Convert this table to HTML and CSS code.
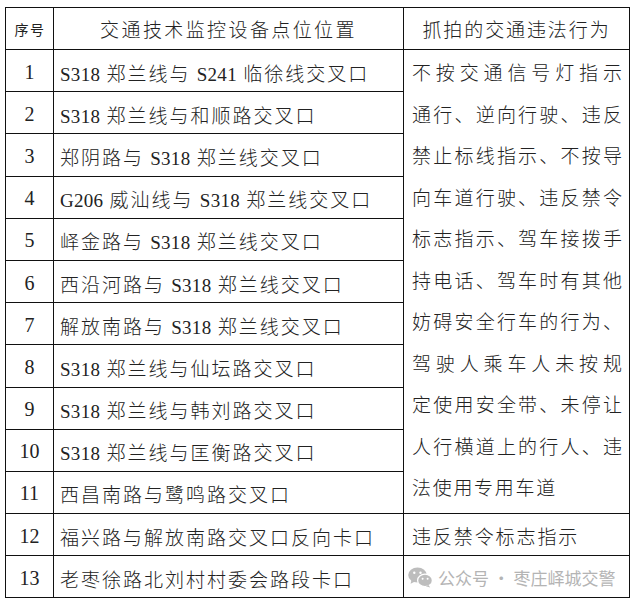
FILE: index.html
```html
<!DOCTYPE html>
<html lang="zh-CN">
<head>
<meta charset="utf-8">
<link rel="stylesheet" href="styles.css">
</head>
<body>
<table class="tbl">
  <colgroup>
    <col class="c1"><col class="c2"><col class="c3">
  </colgroup>
  <tr class="hd">
    <td class="no-h">序号</td>
    <td class="loc-h">交通技术监控设备点位位置</td>
    <td class="act-h">抓拍的交通违法行为</td>
  </tr>
  <tr>
    <td class="no">1</td>
    <td class="loc"><span class="lat">S318</span> 郑兰线与 <span class="lat">S241</span> 临徐线交叉口</td>
    <td class="act" rowspan="11">
      <span class="ln">不按交通信号灯指示</span>
      <span class="ln">通行、逆向行驶、违反</span>
      <span class="ln">禁止标线指示、不按导</span>
      <span class="ln">向车道行驶、违反禁令</span>
      <span class="ln">标志指示、驾车接拨手</span>
      <span class="ln">持电话、驾车时有其他</span>
      <span class="ln">妨碍安全行车的行为、</span>
      <span class="ln">驾驶人乘车人未按规</span>
      <span class="ln">定使用安全带、未停让</span>
      <span class="ln">人行横道上的行人、违</span>
      <span class="ln last">法使用专用车道</span>
    </td>
  </tr>
  <tr>
    <td class="no">2</td>
    <td class="loc"><span class="lat">S318</span> 郑兰线与和顺路交叉口</td>
  </tr>
  <tr>
    <td class="no">3</td>
    <td class="loc">郑阴路与 <span class="lat">S318</span> 郑兰线交叉口</td>
  </tr>
  <tr>
    <td class="no">4</td>
    <td class="loc"><span class="lat">G206</span> 威汕线与 <span class="lat">S318</span> 郑兰线交叉口</td>
  </tr>
  <tr>
    <td class="no">5</td>
    <td class="loc">峄金路与 <span class="lat">S318</span> 郑兰线交叉口</td>
  </tr>
  <tr>
    <td class="no">6</td>
    <td class="loc">西沿河路与 <span class="lat">S318</span> 郑兰线交叉口</td>
  </tr>
  <tr>
    <td class="no">7</td>
    <td class="loc">解放南路与 <span class="lat">S318</span> 郑兰线交叉口</td>
  </tr>
  <tr>
    <td class="no">8</td>
    <td class="loc"><span class="lat">S318</span> 郑兰线与仙坛路交叉口</td>
  </tr>
  <tr>
    <td class="no">9</td>
    <td class="loc"><span class="lat">S318</span> 郑兰线与韩刘路交叉口</td>
  </tr>
  <tr>
    <td class="no">10</td>
    <td class="loc"><span class="lat">S318</span> 郑兰线与匡衡路交叉口</td>
  </tr>
  <tr>
    <td class="no">11</td>
    <td class="loc">西昌南路与鹭鸣路交叉口</td>
  </tr>
  <tr>
    <td class="no">12</td>
    <td class="loc">福兴路与解放南路交叉口反向卡口</td>
    <td class="act1">违反禁令标志指示</td>
  </tr>
  <tr>
    <td class="no">13</td>
    <td class="loc">老枣徐路北刘村村委会路段卡口</td>
    <td class="wm-cell">
      <span class="wm">
        <svg class="wx" width="25" height="21" viewBox="0 0 25 21">
          <ellipse cx="9.5" cy="8" rx="9.3" ry="7.6" fill="#bdbdbd"/>
          <path d="M3.5 13 L2.6 16.8 L7 14.6 Z" fill="#bdbdbd"/>
          <circle cx="6.3" cy="5.8" r="1.2" fill="#fff"/>
          <circle cx="12.5" cy="5.8" r="1.2" fill="#fff"/>
          <ellipse cx="17" cy="13.4" rx="7.4" ry="6.2" fill="#bdbdbd" stroke="#fff" stroke-width="1.3"/>
          <path d="M20.5 18 L22.2 20.6 L17.8 19.2 Z" fill="#bdbdbd"/>
          <circle cx="14.6" cy="11.8" r="1" fill="#fff"/>
          <circle cx="19.6" cy="11.8" r="1" fill="#fff"/>
        </svg>
        <span class="wm-t">公众号 · 枣庄峄城交警</span>
      </span>
    </td>
  </tr>
</table>
</body>
</html>
```

FILE: styles.css
```css
html, body {
  margin: 0;
  padding: 0;
  background: #fff;
}

body {
  font-family: "Noto Sans CJK SC", "Liberation Serif", serif;
  color: #222;
}

.tbl {
  border-collapse: collapse;
  table-layout: fixed;
  width: 624px;
  margin: 7px 0 0 5px;
}

.c1 { width: 48px; }
.c2 { width: 350px; }
.c3 { width: 226px; }

.tbl td {
  border: 1px solid #111;
  vertical-align: middle;
  white-space: nowrap;
}

.tbl .no-h {
  height: 41px;
  padding: 0 0 0 1px;
  text-align: center;
  font-size: 14px;
  letter-spacing: 1.5px;
}

.tbl .loc-h {
  height: 41px;
  padding: 0;
  text-align: center;
  font-size: 19px;
  letter-spacing: 2.4px;
  font-weight: 300;
}

.tbl .act-h {
  height: 41px;
  padding: 0;
  text-align: center;
  font-size: 19px;
  letter-spacing: 1.9px;
  font-weight: 300;
}

.tbl .no {
  height: 38.2px;
  padding: 3px 0 0 0;
  text-align: center;
  font-family: "Liberation Serif", serif;
  font-size: 20px;
}

.tbl .loc {
  height: 38.2px;
  padding: 3px 0 0 6px;
  font-size: 19px;
  letter-spacing: 2px;
  font-weight: 300;
}

.lat {
  font-family: "Liberation Serif", serif;
  font-size: 19px;
  letter-spacing: 0.3px;
  font-weight: 400;
}

.tbl .act {
  vertical-align: top;
  padding: 1px 7px 0 8px;
  font-size: 19px;
  line-height: 41.5px;
  font-weight: 300;
}

.ln {
  display: block;
  text-align: justify;
  text-align-last: justify;
  height: 41.5px;
}

.ln.last {
  text-align: left;
  text-align-last: left;
  letter-spacing: 1.7px;
}

.tbl .act1 {
  height: 39.2px;
  padding: 2px 0 0 8px;
  font-size: 19px;
  letter-spacing: 1.9px;
  font-weight: 300;
}

.tbl .wm-cell {
  height: 41.2px;
  padding: 0 0 0 4px;
}

.wm {
  display: flex;
  align-items: center;
  gap: 5px;
  padding-top: 2px;
}

.wx {
  display: block;
  flex: none;
}

.wm-t {
  font-family: "Noto Sans CJK SC", sans-serif;
  font-size: 17px;
  color: #b4b4b4;
  letter-spacing: 0;
}
```
